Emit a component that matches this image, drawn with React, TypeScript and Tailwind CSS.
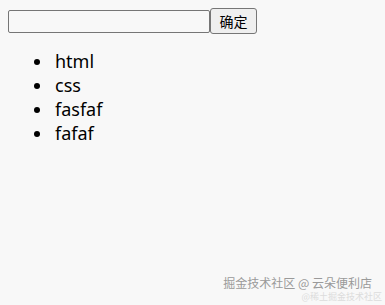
import React, { useState } from 'react';

export default function App() {
  const [items] = useState(['html', 'css', 'fasfaf', 'fafaf']);
  const [text, setText] = useState('');

  return (
    <div className="relative w-[385px] h-[305px] bg-[#f8f8f8] overflow-hidden font-['Noto_Sans','Noto_Sans_CJK_SC',sans-serif] text-black">
      <div className="pt-2 pl-2 flex items-center">
        <input
          value={text}
          onChange={e => setText(e.target.value)}
          className="w-[202px] h-[23px] border border-[#767676] rounded-[2px] bg-[#f8f8f8] outline-none px-1 text-[13px]"
        />
        <button className="h-[26px] w-[47px] border border-[#767676] rounded-[3px] bg-[#efefef] text-[14px] leading-none font-['Noto_Sans_CJK_SC',sans-serif]">
          确定
        </button>
      </div>
      <ul className="mt-[15px] pl-[40px] list-disc text-[18px] leading-[24px] ml-[13px]">
        {items.map((item, idx) => (
          <li key={idx} className="pl-[2px]">{item}</li>
        ))}
      </ul>
      <div className="absolute right-[13px] top-[277px] text-[12px] leading-[12px] text-[#9a9a9a] font-['Noto_Sans_CJK_SC',sans-serif]">
        掘金技术社区 @ 云朵便利店
      </div>
      <div className="absolute right-[3px] top-[292px] text-[9px] leading-[9px] text-[#dcdcdc] font-['Noto_Sans_CJK_SC',sans-serif]">
        @稀土掘金技术社区
      </div>
    </div>
  );
}
